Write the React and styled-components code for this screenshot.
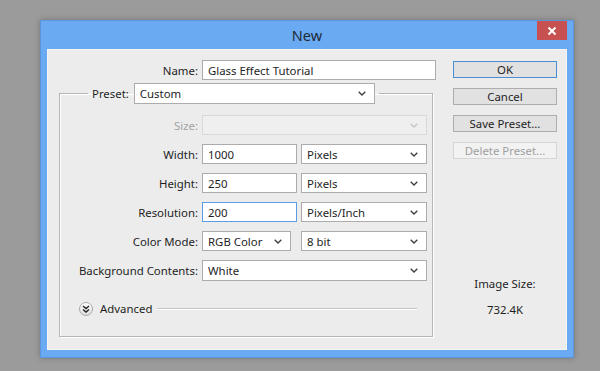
import React from 'react';
import styled, { createGlobalStyle } from 'styled-components';

const GlobalStyle = createGlobalStyle`
  body {
    margin: 0;
    background: #9b9b9b;
    font-family: "Segoe UI", "Noto Sans", "Open Sans", sans-serif;
    font-size: 11.4px;
    color: #1e1e1e;
  }
`;

const Desktop = styled.div`
  height: 371px;
  padding: 20px 0 0 40px;
  box-sizing: border-box;
`;

const Window = styled.div`
  width: 534px;
  height: 338px;
  box-sizing: border-box;
  background: #6aaaf3;
  border: 1px solid #5b94d9;
  padding: 0 6px 7px 6px;
  display: flex;
  flex-direction: column;
  box-shadow: 0 0 6px rgba(0, 0, 0, 0.25);
`;

const TitleBar = styled.div`
  height: 28px;
  display: grid;
  grid-template-columns: 1fr auto 1fr;
`;

const Title = styled.div`
  grid-column: 2;
  align-self: center;
  font-size: 14.5px;
  color: #1f2a36;
`;

const CloseButton = styled.div`
  grid-column: 3;
  justify-self: end;
  width: 30px;
  height: 19px;
  background: #c75050;
  display: flex;
  align-items: center;
  justify-content: center;
`;

const Panel = styled.div`
  flex: 1;
  background: #ececec;
  display: flex;
  padding-top: 10px;
  border: 1px solid #f5f5f5;
`;

const LeftColumn = styled.div`
  width: 393px;
  padding-left: 11px;
  box-sizing: border-box;
`;

const Row = styled.div`
  display: flex;
  align-items: center;
  gap: 4px;
`;

const Label = styled.div`
  width: ${(p) => p.$width || 138}px;
  text-align: right;
  color: ${(p) => (p.$disabled ? '#a3a3a3' : '#1e1e1e')};
  flex-shrink: 0;
`;

const Field = styled.div`
  width: ${(p) => p.$width}px;
  height: ${(p) => p.$height || 20}px;
  box-sizing: border-box;
  margin-left: ${(p) => p.$offset || 0}px;
  background: ${(p) => (p.$disabled ? '#efefef' : '#fff')};
  border: 1px solid ${(p) => (p.$focused ? '#5b9de3' : p.$disabled ? '#d9d9d9' : '#acacac')};
  display: flex;
  align-items: center;
  justify-content: space-between;
  padding: 0 8px 0 5px;
  color: #1e1e1e;
  white-space: nowrap;
`;

const GroupBox = styled.fieldset`
  width: 374px;
  box-sizing: border-box;
  margin: 3px 0 0 0;
  padding: 0 0 20px 0;
  min-width: 0;
  border: 1px solid #b5b5b5;
  box-shadow: inset 1px 1px 0 #fff, 1px 1px 0 #fff;
`;

const Legend = styled.legend`
  margin-left: 28px;
  padding: 0 4px;
  display: flex;
  align-items: center;
  gap: 5px;
`;

const Rows = styled.div`
  display: flex;
  flex-direction: column;
  gap: 9px;
  margin-top: 11px;
`;

const AdvancedRow = styled.div`
  display: flex;
  align-items: center;
  margin: 20px 15px 0 19px;
`;

const AdvancedToggle = styled.div`
  width: 14px;
  height: 14px;
  border-radius: 50%;
  box-sizing: border-box;
  border: 1px solid #a8a8a8;
  background: linear-gradient(#ffffff, #dedede);
  display: flex;
  align-items: center;
  justify-content: center;
  flex-shrink: 0;
`;

const AdvancedText = styled.div`
  margin: 0 5px 0 7px;
`;

const Rule = styled.div`
  flex: 1;
  height: 1px;
  background: #c4c4c4;
  box-shadow: 0 1px 0 #fff;
`;

const RightColumn = styled.div`
  display: flex;
  flex-direction: column;
  padding-left: 12px;
`;

const Button = styled.div`
  width: 104px;
  height: 17px;
  box-sizing: border-box;
  margin-top: ${(p) => (p.$first ? 1 : 10)}px;
  background: ${(p) => (p.$disabled ? '#f2f2f2' : '#e1e1e1')};
  border: 1px solid ${(p) => (p.$primary ? '#4a8fd4' : p.$disabled ? '#d5d5d5' : '#adadad')};
  color: ${(p) => (p.$disabled ? '#a0a0a0' : '#1e1e1e')};
  display: flex;
  align-items: center;
  justify-content: center;
  line-height: 1;
`;

const SizeInfo = styled.div`
  width: 104px;
  text-align: center;
  margin-top: ${(p) => p.$top}px;
  line-height: 15px;
`;

const Chevron = ({ disabled }) => (
  <svg width="8" height="5" viewBox="0 0 8 5">
    <polyline
      points="0.7,0.7 4,4 7.3,0.7"
      fill="none"
      stroke={disabled ? '#c4c4c4' : '#3c3c3c'}
      strokeWidth="1.3"
    />
  </svg>
);

const Select = ({ width, value, disabled, height, offset }) => (
  <Field $width={width} $disabled={disabled} $height={height} $offset={offset}>
    <span>{value}</span>
    <Chevron disabled={disabled} />
  </Field>
);

const Input = ({ width, value, focused }) => (
  <Field $width={width} $focused={focused}>
    <span>{value}</span>
  </Field>
);

export default function App() {
  return (
    <>
      <GlobalStyle />
      <Desktop>
        <Window>
          <TitleBar>
            <Title>New</Title>
            <CloseButton>
              <svg width="10" height="10" viewBox="0 0 10 10">
                <path d="M1.5 1.5 L8.5 8.5 M8.5 1.5 L1.5 8.5" stroke="#fff" strokeWidth="2" />
              </svg>
            </CloseButton>
          </TitleBar>
          <Panel>
            <LeftColumn>
              <Row>
                <Label $width={139}>Name:</Label>
                <Input width={234} value="Glass Effect Tutorial" />
              </Row>
              <GroupBox>
                <Legend>
                  <span>Preset:</span>
                  <Select width={241} value="Custom" height={21} />
                </Legend>
                <Rows>
                  <Row>
                    <Label $disabled>Size:</Label>
                    <Select width={225} value="" disabled />
                  </Row>
                  <Row>
                    <Label>Width:</Label>
                    <Input width={95} value="1000" />
                    <Select width={126} value="Pixels" />
                  </Row>
                  <Row>
                    <Label>Height:</Label>
                    <Input width={95} value="250" />
                    <Select width={126} value="Pixels" />
                  </Row>
                  <Row>
                    <Label>Resolution:</Label>
                    <Input width={95} value="200" focused />
                    <Select width={126} value="Pixels/Inch" />
                  </Row>
                  <Row>
                    <Label>Color Mode:</Label>
                    <Select width={89} value="RGB Color" />
                    <Select width={126} value="8 bit" offset={6} />
                  </Row>
                  <Row>
                    <Label>Background Contents:</Label>
                    <Select width={225} value="White" height={21} />
                  </Row>
                </Rows>
                <AdvancedRow>
                  <AdvancedToggle>
                    <svg width="8" height="8" viewBox="0 0 8 8">
                      <path
                        d="M1 1 L4 3.5 L7 1 M1 4.5 L4 7 L7 4.5"
                        fill="none"
                        stroke="#222"
                        strokeWidth="1.4"
                      />
                    </svg>
                  </AdvancedToggle>
                  <AdvancedText>Advanced</AdvancedText>
                  <Rule />
                </AdvancedRow>
              </GroupBox>
            </LeftColumn>
            <RightColumn>
              <Button $first $primary>OK</Button>
              <Button>Cancel</Button>
              <Button>Save Preset...</Button>
              <Button $disabled>Delete Preset...</Button>
              <SizeInfo $top={117}>Image Size:</SizeInfo>
              <SizeInfo $top={11}>732.4K</SizeInfo>
            </RightColumn>
          </Panel>
        </Window>
      </Desktop>
    </>
  );
}
